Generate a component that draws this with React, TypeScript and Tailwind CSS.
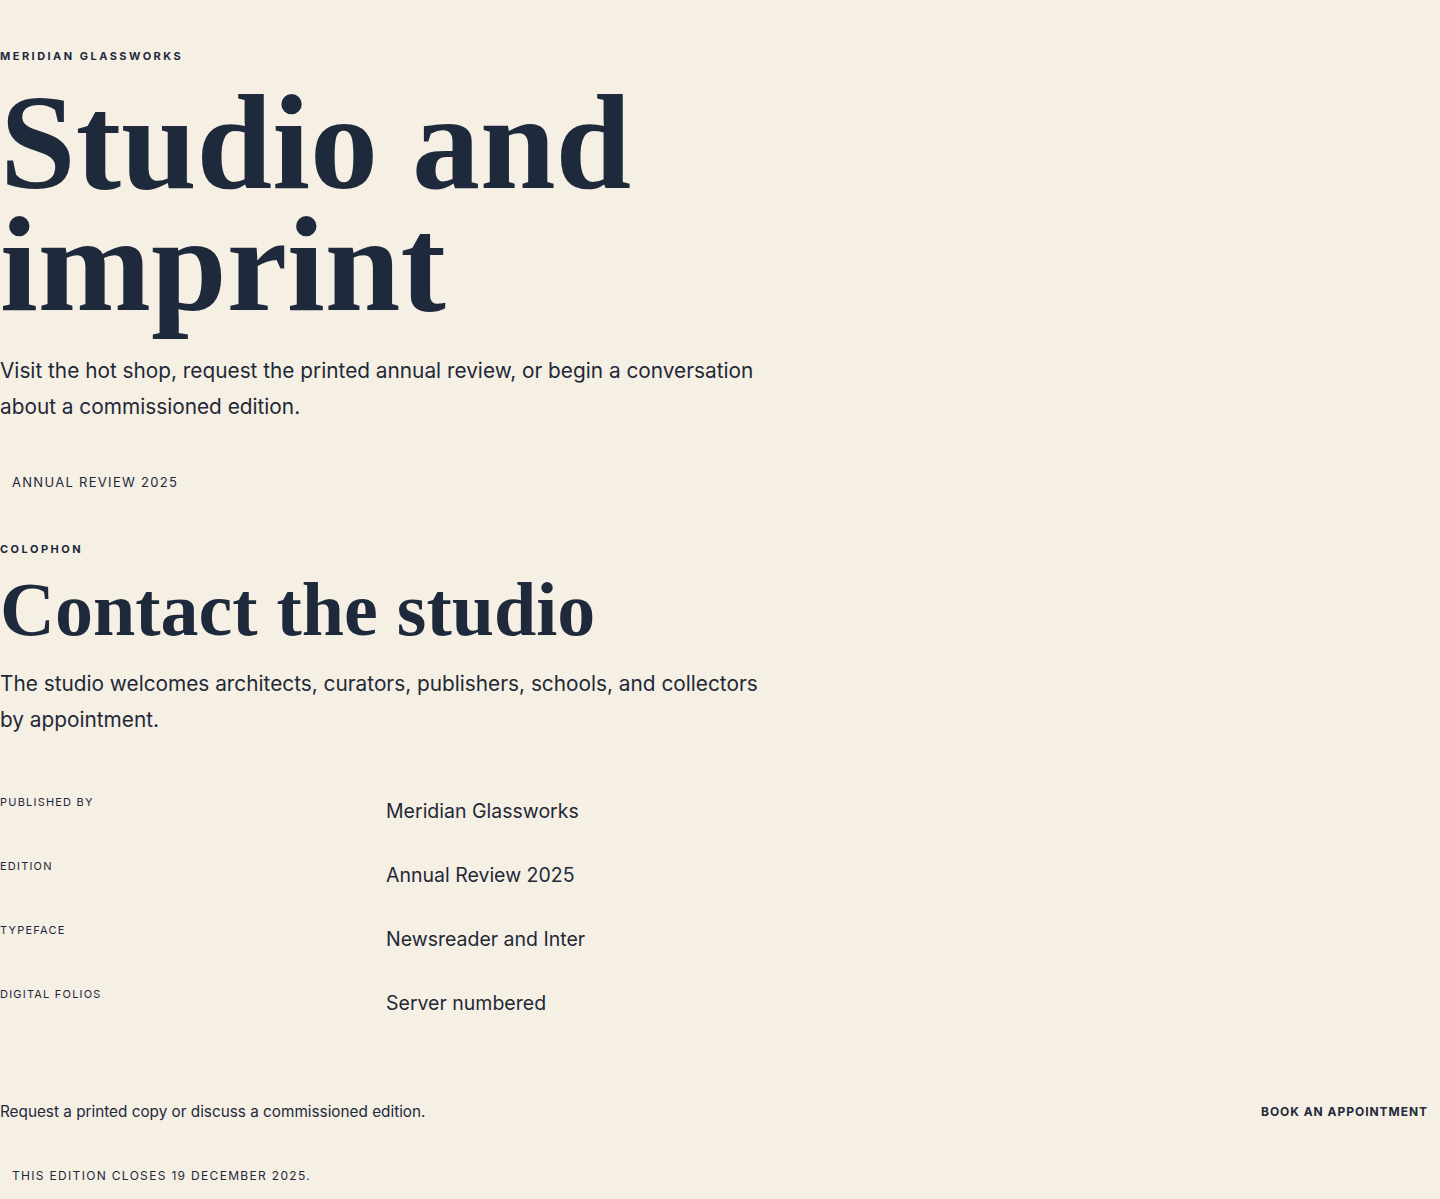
import React from "react";

const rows: [string, string][] = [
  ["Published by", "Meridian Glassworks"],
  ["Edition", "Annual Review 2025"],
  ["Typeface", "Newsreader and Inter"],
  ["Digital folios", "Server numbered"],
];

export default function App() {
  return (
    <div className="min-h-screen bg-[#f5efe4] text-[#1e293b] font-['Inter',sans-serif]">
      <div className="pt-[48px] pb-[3px]">
        <header>
          <p className="text-[11px] leading-4 font-bold tracking-[0.225em] uppercase">
            Meridian Glassworks
          </p>
          <h1 className="mt-[17px] max-w-3xl font-['Liberation_Serif','Times_New_Roman',serif] text-[136px] leading-[0.9] font-bold text-[#1e293b]">
            Studio and imprint
          </h1>
          <p className="mt-[27px] max-w-3xl text-[20.8px] leading-9 text-[#1f2937]">
            Visit the hot shop, request the printed annual review, or begin a conversation about a
            commissioned edition.
          </p>
          <div className="mt-[37px]">
            <a href="#" className="inline-block px-3 py-3 text-[13px] leading-4 tracking-[0.1em] uppercase">
              Annual Review 2025
            </a>
          </div>
        </header>

        <section className="mt-[39px]">
          <p className="text-[11px] leading-4 font-bold tracking-[0.225em] uppercase">Colophon</p>
          <h2 className="mt-[14px] font-['Liberation_Serif','Times_New_Roman',serif] text-[76px] leading-none font-bold">
            Contact the studio
          </h2>
          <p className="mt-[19px] max-w-3xl text-[20.8px] leading-9 text-[#1f2937]">
            The studio welcomes architects, curators, publishers, schools, and collectors by
            appointment.
          </p>
          <dl className="mt-[56px]">
            {rows.map(([k, v]) => (
              <div key={k} className="grid grid-cols-[386px_1fr] h-16">
                <dt className="text-[11px] leading-4 tracking-[0.11em] uppercase">{k}</dt>
                <dd className="mt-[3px] text-[19.5px] leading-7 text-[#1f2937]">{v}</dd>
              </div>
            ))}
          </dl>
        </section>

        <footer className="mt-[42px]">
          <div className="flex items-center justify-between">
            <p className="text-[15.3px] leading-6">Request a printed copy or discuss a commissioned edition.</p>
            <a href="#" className="inline-block px-3 py-3 text-[12px] leading-4 font-bold tracking-[0.08em] uppercase">
              Book an appointment
            </a>
          </div>
          <div className="mt-[24px]">
            <p className="inline-block px-3 py-3 text-[12px] leading-4 tracking-[0.11em] uppercase">
              This edition closes 19 December 2025.
            </p>
          </div>
        </footer>
      </div>
    </div>
  );
}
